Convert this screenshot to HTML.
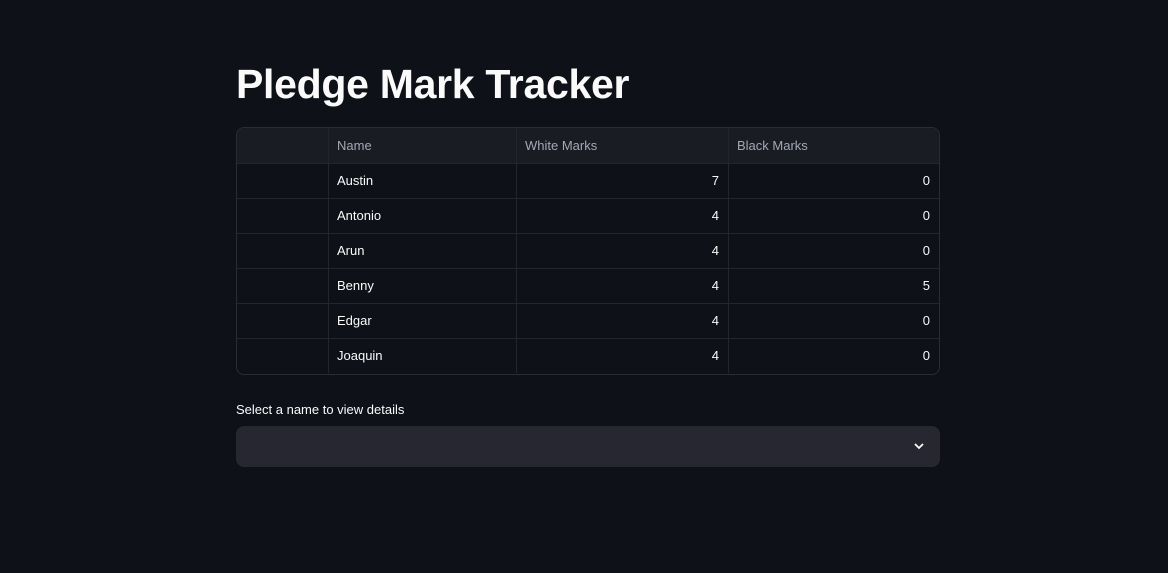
<!DOCTYPE html>
<html><head><style>
body{margin:0;background:#0e1117;width:1168px;height:573px;overflow:hidden;font-family:"Liberation Sans",sans-serif;color:#fafafa;position:relative}
h1{position:absolute;left:236px;top:58px;margin:0;font-size:41px;font-weight:700;letter-spacing:-0.3px;line-height:52px}
.t{position:absolute;left:236px;top:127px;width:702px;height:246px;border:1px solid #2a2c34;border-radius:8px;overflow:hidden}
.r{position:absolute;left:0;width:702px;height:35px;border-top:1px solid #24262e;font-size:13px}
.r div{position:absolute;top:0;height:34px;line-height:34px;border-left:1px solid #24262e;box-sizing:border-box}
.h{background:#1a1c23;color:#a3a8b4;top:0;border-top:none;height:35px}
.h div{height:35px;line-height:35px}
.c1{left:91px;width:188px;padding-left:8px}
.c2{left:279px;width:212px;padding-right:9px;text-align:right}
.c3{left:491px;width:211px;padding-right:9px;text-align:right}
.h .c2,.h .c3{text-align:left;padding-left:8px}
.lab{position:absolute;left:236px;top:402px;font-size:13px}
.sel{position:absolute;left:236px;top:426px;width:704px;height:41px;background:#262730;border-radius:8px}
</style></head><body>
<h1>Pledge Mark Tracker</h1>
<div class="t">
<div class="r h"><div class="c1">Name</div><div class="c2">White Marks</div><div class="c3">Black Marks</div></div>
<div class="r" style="top:35px"><div class="c1">Austin</div><div class="c2">7</div><div class="c3">0</div></div>
<div class="r" style="top:70px"><div class="c1">Antonio</div><div class="c2">4</div><div class="c3">0</div></div>
<div class="r" style="top:105px"><div class="c1">Arun</div><div class="c2">4</div><div class="c3">0</div></div>
<div class="r" style="top:140px"><div class="c1">Benny</div><div class="c2">4</div><div class="c3">5</div></div>
<div class="r" style="top:175px"><div class="c1">Edgar</div><div class="c2">4</div><div class="c3">0</div></div>
<div class="r" style="top:210px"><div class="c1">Joaquin</div><div class="c2">4</div><div class="c3">0</div></div>
</div>
<div class="lab">Select a name to view details</div>
<div class="sel"><svg style="position:absolute;left:677px;top:15px" width="12" height="10" viewBox="0 0 12 10"><path d="M2 3l4 4 4-4" stroke="#fafafa" stroke-width="1.8" fill="none"/></svg></div>
</body></html>
